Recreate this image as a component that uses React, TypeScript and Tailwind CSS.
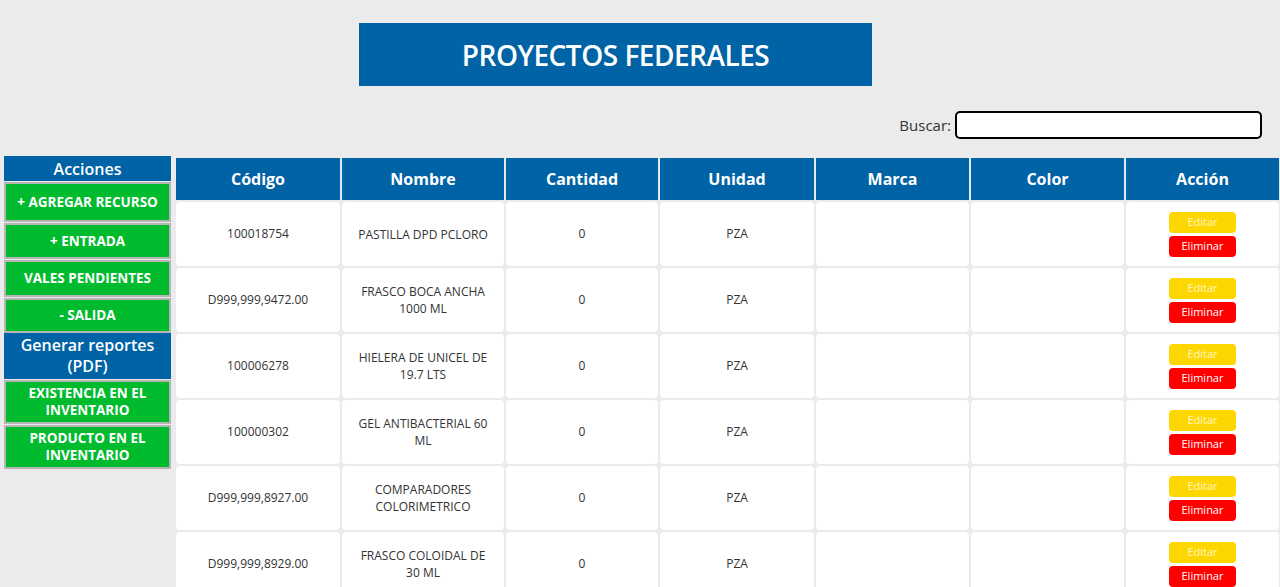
import React from 'react';

const rows = [
  { codigo: '100018754', nombre: 'PASTILLA DPD PCLORO', cantidad: '0', unidad: 'PZA' },
  { codigo: 'D999,999,9472.00', nombre: 'FRASCO BOCA ANCHA 1000 ML', cantidad: '0', unidad: 'PZA' },
  { codigo: '100006278', nombre: 'HIELERA DE UNICEL DE 19.7 LTS', cantidad: '0', unidad: 'PZA' },
  { codigo: '100000302', nombre: 'GEL ANTIBACTERIAL 60 ML', cantidad: '0', unidad: 'PZA' },
  { codigo: 'D999,999,8927.00', nombre: 'COMPARADORES COLORIMETRICO', cantidad: '0', unidad: 'PZA' },
  { codigo: 'D999,999,8929.00', nombre: 'FRASCO COLOIDAL DE 30 ML', cantidad: '0', unidad: 'PZA' },
];

const columns = [
  { label: 'Código', w: 'w-[164px]' },
  { label: 'Nombre', w: 'w-[162px]' },
  { label: 'Cantidad', w: 'w-[152px]' },
  { label: 'Unidad', w: 'w-[154px]' },
  { label: 'Marca', w: 'w-[153px]' },
  { label: 'Color', w: 'w-[153px]' },
  { label: 'Acción', w: 'w-[153px]' },
];

const SideButton = ({ children, h }: { children: React.ReactNode; h: string }) => (
  <button
    className={`w-full ${h} flex items-center justify-center text-center px-2 bg-[#00bb2d] text-white text-[13.5px] font-bold leading-[17px] border-2 border-[#b5b5b5] mb-[1px]`}
  >
    {children}
  </button>
);

export default function App() {
  return (
    <div className="min-h-screen bg-[#ebebeb] overflow-hidden font-['Open_Sans',sans-serif]">
      {/* Title */}
      <div className="pt-[23px]">
        <div className="ml-[359px] w-[513px] h-[63px] bg-[#0063a6] flex items-center justify-center">
          <h1 className="text-white text-[28px] font-semibold tracking-[-0.5px]">PROYECTOS FEDERALES</h1>
        </div>
      </div>

      {/* Search */}
      <div className="flex justify-end items-center mt-[25px] pr-[18px]">
        <label className="text-[#333] text-[15px] mr-[4px]">Buscar:</label>
        <input className="w-[307px] h-[28px] bg-white border-2 border-black rounded-[5px] px-2 outline-none" />
      </div>

      <div className="flex items-start mt-[17px]">
        {/* Sidebar */}
        <aside className="ml-[4px] w-[167px] flex-shrink-0">
          <div className="h-[25px] bg-[#0063a6] text-white text-[16px] font-semibold flex items-center justify-center mb-[1px]">
            Acciones
          </div>
          <SideButton h="h-[40px]">+ AGREGAR RECURSO</SideButton>
          <SideButton h="h-[36px]">+ ENTRADA</SideButton>
          <SideButton h="h-[37px]">VALES PENDIENTES</SideButton>
          <div className="-mb-[1px]">
            <SideButton h="h-[35px]">- SALIDA</SideButton>
          </div>
          <div className="h-[46px] bg-[#0063a6] text-white text-[16px] font-semibold leading-[21px] flex items-center justify-center text-center mb-[1px]">
            Generar reportes
            <br />
            (PDF)
          </div>
          <SideButton h="h-[44px]">EXISTENCIA EN EL INVENTARIO</SideButton>
          <SideButton h="h-[44px]">PRODUCTO EN EL INVENTARIO</SideButton>
        </aside>

        {/* Table */}
        <table className="ml-[3px] border-separate border-spacing-[2px] table-fixed flex-shrink-0">
          <thead>
            <tr>
              {columns.map((c) => (
                <th
                  key={c.label}
                  className={`${c.w} h-[42px] bg-[#0063a6] text-white text-[16px] font-bold shadow-[1px_0_0_#dfe9f2]`}
                >
                  {c.label}
                </th>
              ))}
            </tr>
          </thead>
          <tbody>
            {rows.map((r) => (
              <tr key={r.codigo}>
                <td className="h-[64px] bg-white rounded-[4px] text-center text-[12px] text-[#333] px-3">{r.codigo}</td>
                <td className="h-[64px] bg-white rounded-[4px] text-center text-[12px] leading-[17px] text-[#333] px-3">{r.nombre}</td>
                <td className="h-[64px] bg-white rounded-[4px] text-center text-[12px] text-[#333]">{r.cantidad}</td>
                <td className="h-[64px] bg-white rounded-[4px] text-center text-[12px] text-[#333]">{r.unidad}</td>
                <td className="h-[64px] bg-white rounded-[4px]"></td>
                <td className="h-[64px] bg-white rounded-[4px]"></td>
                <td className="h-[64px] bg-white rounded-[4px]">
                  <div className="flex flex-col items-center gap-[3px]">
                    <button className="w-[67px] h-[21px] rounded-[4px] bg-[#ffd700] text-[#fff6c8] text-[11px]">Editar</button>
                    <button className="w-[67px] h-[21px] rounded-[4px] bg-[#ff0000] text-white text-[11px]">Eliminar</button>
                  </div>
                </td>
              </tr>
            ))}
          </tbody>
        </table>
      </div>
    </div>
  );
}
